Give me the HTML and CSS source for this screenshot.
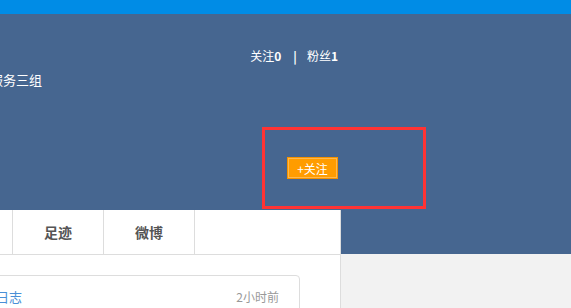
FILE: index.html
```html
<!DOCTYPE html>
<html lang="zh-CN">

<head>
    <meta charset="UTF-8">
    <meta name="viewport" content="width=device-width, initial-scale=1.0">
    <title>个人主页</title>
    <link rel="stylesheet" href="styles.css">
</head>

<body>
    <div class="topbar"></div>

    <div class="banner">
        <div class="banner-inner">
            <div class="profile">
                <div class="avatar"></div>
                <div class="name">客户服务三组</div>
            </div>
            <div class="side">
                <div class="stats">
                    关注<b>0</b><span class="sep">|</span>粉丝<b>1</b>
                </div>
                <button class="follow-btn">+关注</button>
            </div>
        </div>
    </div>

    <div class="main">
        <ul class="tabs">
            <li>主页</li>
            <li>日志</li>
            <li>足迹</li>
            <li>微博</li>
        </ul>

        <div class="feed-item">
            <a href="#" class="feed-title">工作日志</a>
            <span class="feed-time">2小时前</span>
        </div>
    </div>

    <!-- 标注框 -->
    <div class="mark"></div>
</body>

</html>
```

FILE: styles.css
```css
body {
    font-family: "Microsoft YaHei", "Noto Sans CJK SC", sans-serif;
    background-color: #f2f2f2;
    margin: 0;
    padding: 0;
    overflow: hidden;
}

.topbar {
    height: 14px;
    background: #008ce6;
}

.banner {
    height: 240px;
    background: #466690;
}

.banner-inner {
    width: 507px;
    margin-left: -169px;
    display: flex;
    justify-content: space-between;
}

.profile {
    display: flex;
    gap: 33px;
    padding-top: 57px;
}

.avatar {
    width: 100px;
    height: 100px;
}

.name {
    color: #fff;
    font-size: 13px;
    line-height: 18px;
}

.side {
    display: flex;
    flex-direction: column;
    align-items: flex-end;
    padding-top: 33px;
}

.stats {
    color: #fff;
    font-size: 12px;
    line-height: 18px;
}

.stats b {
    font-weight: bold;
}

.sep {
    font-weight: bold;
    margin: 0 10px 0 12px;
}

.follow-btn {
    margin-top: 92px;
    width: 51px;
    height: 22px;
    padding: 0;
    background: #ff9c00;
    color: #fff;
    border: 1px solid #f59300;
    box-shadow: inset 0 0 0 1px #ffb84d;
    font-family: inherit;
    font-size: 12px;
    cursor: pointer;
}

.main {
    width: 509px;
    margin-left: -169px;
    margin-top: -44px;
    min-height: 120px;
    background: #fff;
    border-right: 1px solid #ddd;
}

.tabs {
    display: flex;
    list-style: none;
    margin: 0;
    padding: 0;
    border-bottom: 1px solid #ddd;
}

.tabs li {
    width: 90px;
    height: 44px;
    line-height: 44px;
    text-align: center;
    border-right: 1px solid #ddd;
    color: #555;
    font-size: 14px;
    font-weight: bold;
}

.feed-item {
    display: flex;
    justify-content: space-between;
    margin: 20px 40px 0 20px;
    padding: 11px 20px 11px 118px;
    border: 1px solid #ddd;
    border-radius: 4px;
    line-height: 20px;
}

.feed-title {
    color: #4a8fd6;
    font-size: 13px;
    text-decoration: none;
}

.feed-time {
    color: #999;
    font-size: 12px;
}

.mark {
    position: absolute;
    left: 262px;
    top: 127px;
    width: 164px;
    height: 82px;
    box-sizing: border-box;
    border: 3px solid #f33;
}
```
